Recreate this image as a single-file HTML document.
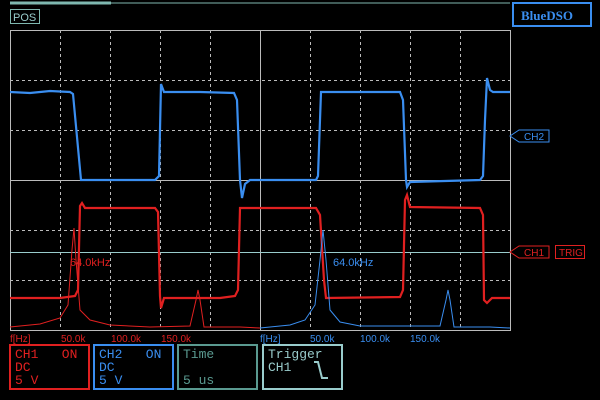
<!DOCTYPE html>
<html><head><style>
body{margin:0;background:#000;width:600px;height:400px;overflow:hidden;position:relative;font-family:"Liberation Sans",sans-serif}
.box{position:absolute;border:2px solid;font-family:"Liberation Mono",monospace;font-size:13px;line-height:13px;padding:2px 4px;box-sizing:border-box}
</style></head><body>
<svg width="600" height="400" style="position:absolute;left:0;top:0">
<line x1="10" y1="3" x2="510" y2="3" stroke="#7fb8b0" stroke-width="1"/>
<line x1="10" y1="3" x2="111" y2="3" stroke="#7fb8b0" stroke-width="3"/>
<rect x="10.5" y="9.5" width="29" height="14" fill="none" stroke="#7fb8b0"/>
<text x="13" y="21" fill="#9cc" font-family="Liberation Sans" font-size="11">POS</text>
<g stroke="#bbb" stroke-width="1" stroke-dasharray="3,3">
<line x1="60.5" y1="30" x2="60.5" y2="330"/><line x1="110.5" y1="30" x2="110.5" y2="330"/><line x1="160.5" y1="30" x2="160.5" y2="330"/><line x1="210.5" y1="30" x2="210.5" y2="330"/>
<line x1="310.5" y1="30" x2="310.5" y2="330"/><line x1="360.5" y1="30" x2="360.5" y2="330"/><line x1="410.5" y1="30" x2="410.5" y2="330"/><line x1="460.5" y1="30" x2="460.5" y2="330"/>
<line x1="10" y1="80.5" x2="510" y2="80.5"/><line x1="10" y1="130.5" x2="510" y2="130.5"/><line x1="10" y1="230.5" x2="510" y2="230.5"/><line x1="10" y1="280.5" x2="510" y2="280.5"/>
</g>
<rect x="10.5" y="30.5" width="500" height="300" fill="none" stroke="#bbb"/>
<line x1="260.5" y1="30" x2="260.5" y2="330" stroke="#bbb"/>
<line x1="10" y1="180.5" x2="510" y2="180.5" stroke="#bbb"/>
<line x1="10" y1="252.5" x2="510" y2="252.5" stroke="#9cc"/>
<path d="M10 92 L30 93 L50 91 L70 92 L73 94 L81 180 L155 180 L159 176 L161 84 L164 92 L200 92 L234 93 L237 100 L240 180 L242 198 L245 184 L250 180 L316 180 L318 176 L321 92 L400 92 L403 100 L406 180 L407 187 L410 182 L480 180 L483 176 L485 120 L487 78 L490 90 L493 92 L510 92" fill="none" stroke="#3a8ef0" stroke-width="2.2"/>
<path d="M10 298 L60 298 L75 296 L78 290 L80 206 L82 203 L85 208 L155 208 L158 212 L160 296 L161 308 L164 298 L220 298 L235 296 L238 290 L240 208 L316 208 L320 215 L324 280 L326 298 L400 297 L403 290 L405 200 L407 195 L410 207 L480 208 L483 215 L484 300 L487 303 L492 298 L510 298" fill="none" stroke="#e02020" stroke-width="2.2"/>
<path d="M10 327 L40 324 L60 318 L68 305 L72 250 L74 228 L76 260 L80 310 L90 320 L110 325 L150 327 L190 326 L196 300 L198 290 L200 300 L204 327 L240 327 L260 328" fill="none" stroke="#e02020" stroke-width="1"/>
<path d="M260 328 L290 325 L305 320 L315 305 L320 260 L323 230 L326 260 L330 310 L340 322 L360 326 L440 326 L446 300 L448 290 L450 300 L454 327 L490 327 L510 328" fill="none" stroke="#3a8ef0" stroke-width="1"/>
<text x="70" y="266" fill="#e02020" font-size="11">64.0kHz</text>
<text x="333" y="266" fill="#3a8ef0" font-size="11">64.0kHz</text>
<g font-size="10"><text x="10" y="342" fill="#e02020">f[Hz]</text><text x="61" y="342" fill="#e02020">50.0k</text><text x="111" y="342" fill="#e02020">100.0k</text><text x="161" y="342" fill="#e02020">150.0k</text>
<text x="260" y="342" fill="#3a8ef0">f[Hz]</text><text x="310" y="342" fill="#3a8ef0">50.0k</text><text x="360" y="342" fill="#3a8ef0">100.0k</text><text x="410" y="342" fill="#3a8ef0">150.0k</text></g>
<path d="M510 136 L519 130 L549 130 L549 142 L519 142 Z" fill="none" stroke="#3a8ef0"/>
<text x="524" y="140" fill="#3a8ef0" font-size="10">CH2</text>
<path d="M510 252 L519 246 L549 246 L549 258 L519 258 Z" fill="none" stroke="#e02020"/>
<text x="524" y="256" fill="#e02020" font-size="10">CH1</text>
<rect x="555.5" y="245.5" width="29" height="13" fill="none" stroke="#e02020"/>
<text x="559" y="256" fill="#e02020" font-size="10">TRIG</text>
<rect x="513" y="3" width="78" height="23" fill="none" stroke="#3a8ef0" stroke-width="2"/>
<text x="521" y="20" fill="#3a8ef0" font-family="Liberation Serif" font-weight="bold" font-size="13">BlueDSO</text>
<path d="M314 362 L318 362 L322 378 L328 378" fill="none" stroke="#9cc" stroke-width="2"/>
</svg>
<div class="box" style="left:9px;top:344px;width:81px;height:46px;border-color:#e02020;color:#e02020">CH1&nbsp;&nbsp;&nbsp;ON<br>DC<br>5 V</div>
<div class="box" style="left:93px;top:344px;width:81px;height:46px;border-color:#3a8ef0;color:#3a8ef0">CH2&nbsp;&nbsp;&nbsp;ON<br>DC<br>5 V</div>
<div class="box" style="left:177px;top:344px;width:81px;height:46px;border-color:#5a9a90;color:#5a9a90">Time<br><br>5 us</div>
<div class="box" style="left:262px;top:344px;width:81px;height:46px;border-color:#9cc;color:#9cc">Trigger<br>CH1</div>
</body></html>
